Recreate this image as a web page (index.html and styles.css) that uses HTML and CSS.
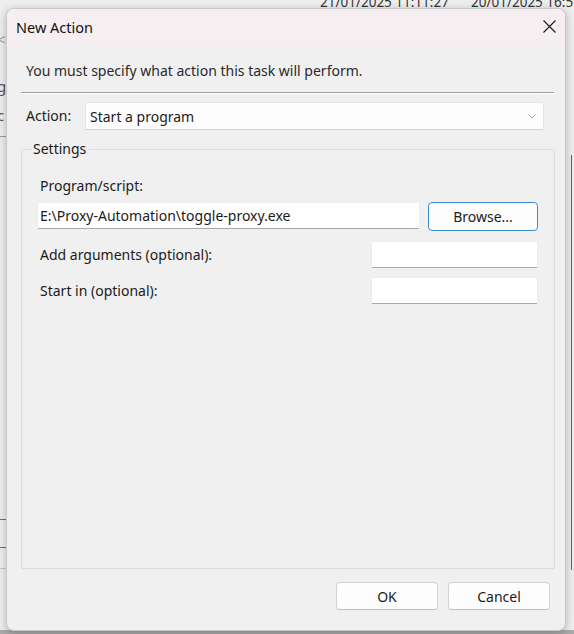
FILE: index.html
```html
<!DOCTYPE html>
<html lang="en">
<head>
<meta charset="utf-8">
<title>New Action</title>
<link rel="stylesheet" href="styles.css">
</head>
<body>
<div class="desktop">
  <div class="bg-window">
    <div class="bg-dates"><span class="d1">21/01/2025 11:11:27</span><span class="d2">20/01/2025 16:51</span></div>
    <span class="bg-glyph g1">&lt;</span>
    <span class="bg-glyph g2">g</span>
    <span class="bg-glyph g3">c</span>
    <span class="bg-line l1"></span>
    <span class="bg-line l2"></span>
    <span class="bg-line l3"></span>
    <span class="bg-line l4"></span>
    <span class="bg-vline"></span>
  </div>

  <div class="dialog">
    <div class="titlebar">
      <span class="title">New Action</span>
      <span class="close">
        <svg width="13" height="13" viewBox="0 0 13 13"><path d="M0.5 0.5 L12.5 12.5 M12.5 0.5 L0.5 12.5" stroke="#1a1a1a" stroke-width="1.1" fill="none"/></svg>
      </span>
    </div>
    <div class="body">
      <p class="message">You must specify what action this task will perform.</p>
      <div class="sep"></div>
      <div class="action-row">
        <span class="action-label">Action:</span>
        <div class="combo">
          <span>Start a program</span>
          <svg width="8" height="5" viewBox="0 0 8 5"><path d="M0.5 0.5 L4 4 L7.5 0.5" stroke="#a0a0a0" stroke-width="1" fill="none"/></svg>
        </div>
      </div>
      <fieldset class="group">
        <legend>Settings</legend>
        <div class="field-label">Program/script:</div>
        <div class="prog-row">
          <div class="input wide">E:\Proxy-Automation\toggle-proxy.exe</div>
          <span class="btn browse">Browse...</span>
        </div>
        <div class="opt-row">
          <span class="opt-label">Add arguments (optional):</span>
          <div class="input short"></div>
        </div>
        <div class="opt-row second">
          <span class="opt-label">Start in (optional):</span>
          <div class="input short"></div>
        </div>
      </fieldset>
      <div class="buttons">
        <span class="btn">OK</span>
        <span class="btn">Cancel</span>
      </div>
    </div>
  </div>
</div>
</body>
</html>
```
FILE: styles.css
```css
html, body {
  margin: 0;
  padding: 0;
}
body {
  width: 574px;
  height: 634px;
  overflow: hidden;
  font-family: "Noto Sans", "Open Sans", sans-serif;
  font-size: 14px;
  color: #1b1b1b;
}
.desktop {
  position: relative;
  width: 574px;
  height: 634px;
  background: #a9a9a9;
}
.bg-window {
  position: absolute;
  left: 0;
  top: 0;
  width: 574px;
  height: 630px;
  background: #eeeeee;
}
.bg-dates {
  position: absolute;
  top: -5px;
  left: 0;
  width: 574px;
  height: 14px;
  font-size: 13.5px;
  line-height: 14px;
  color: #333;
  white-space: nowrap;
}
.bg-dates .d1 { position: absolute; left: 320px; top: 0; }
.bg-dates .d2 { position: absolute; left: 471px; top: 0; }
.bg-glyph {
  position: absolute;
  left: -3px;
  font-size: 15px;
  color: #555;
}
.g1 { top: 29px; color: #999; }
.g2 { top: 76px; }
.g3 { top: 105px; }
.bg-line {
  position: absolute;
  left: 0;
  width: 8px;
  height: 1px;
  background: #9a9a9a;
}
.l1 { top: 136px; }
.l2 { top: 519px; background: #3a7bc0; }
.l3 { top: 547px; background: #3a7bc0; }
.l4 { top: 568px; background: #c4c4c4; }
.bg-vline {
  position: absolute;
  left: 571px;
  top: 155px;
  width: 1px;
  height: 415px;
  background: #666;
}

.dialog {
  position: absolute;
  left: 6px;
  top: 8px;
  width: 560px;
  height: 623px;
  box-sizing: border-box;
  border: 1px solid #c9c9c9;
  border-radius: 8px;
  background: #f0f0f0;
  box-shadow: 0 2px 8px rgba(0, 0, 0, 0.25);
  display: flex;
  flex-direction: column;
  overflow: hidden;
}
.titlebar {
  height: 37px;
  box-sizing: border-box;
  flex: none;
  background: #f6eff1;
  display: flex;
  align-items: center;
  justify-content: space-between;
  padding: 0 9px 2px 9px;
}
.title {
  font-size: 14.5px;
  color: #111;
  line-height: 20px;
}
.close {
  width: 13px;
  height: 13px;
  display: flex;
  align-items: center;
  justify-content: center;
}
.body {
  flex: 1;
  display: flex;
  flex-direction: column;
  padding: 0 10px 20px 14px;
}
.message {
  margin: 15px 0 0 5px;
  line-height: 20px;
  color: #2a2a2a;
}
.sep {
  margin-top: 11px;
  margin-right: 1px;
  height: 0;
  border-top: 1px solid #a0a0a0;
  border-bottom: 1px solid #ffffff;
}
.action-row {
  margin-top: 8px;
  display: flex;
  align-items: center;
  padding-right: 11px;
}
.action-label {
  width: 64px;
  padding-left: 5px;
  box-sizing: border-box;
  line-height: 20px;
}
.combo {
  flex: 1;
  height: 28px;
  box-sizing: border-box;
  background: #fdfdfd;
  border: 1px solid #e6e6e6;
  border-bottom-color: #d2d2d2;
  border-radius: 2px;
  display: flex;
  align-items: center;
  justify-content: space-between;
  padding: 0 7px 0 4px;
}
.group {
  flex: 1;
  margin: 9px 0 0 0;
  padding: 0 16px 0 15px;
  border: 1px solid #dddddd;
  border-radius: 2px;
  min-width: 0;
}
.group legend {
  margin-left: -5px;
  padding: 0 3px 0 1px;
  line-height: 20px;
}
.field-label {
  margin: 17px 0 0 3px;
  line-height: 20px;
}
.prog-row {
  margin-top: 6px;
  display: flex;
  align-items: flex-start;
  justify-content: space-between;
}
.input {
  box-sizing: border-box;
  height: 27px;
  background: #ffffff;
  border: 1px solid #ededed;
  border-bottom-color: #a8a8a8;
  border-radius: 2px;
  line-height: 25px;
  padding: 0 2px;
  white-space: nowrap;
}
.input.wide {
  width: 383px;
}
.input.short {
  width: 167px;
}
.btn {
  box-sizing: border-box;
  display: inline-flex;
  align-items: center;
  justify-content: center;
  height: 28px;
  background: #fdfdfd;
  border: 1px solid #d3d3d3;
  border-bottom-color: #c2c2c2;
  border-radius: 4px;
  color: #1b1b1b;
}
.browse {
  width: 110px;
  height: 29px;
  border: 1.5px solid #3f87cf;
}
.opt-row {
  margin-top: 10px;
  display: flex;
  align-items: center;
  justify-content: space-between;
}
.opt-row.second {
  margin-top: 9px;
}
.opt-label {
  padding-left: 3px;
  line-height: 20px;
}
.buttons {
  margin-top: 13px;
  display: flex;
  justify-content: flex-end;
  gap: 10px;
  padding-right: 5px;
}
.buttons .btn {
  width: 102px;
  height: 28px;
}
```
